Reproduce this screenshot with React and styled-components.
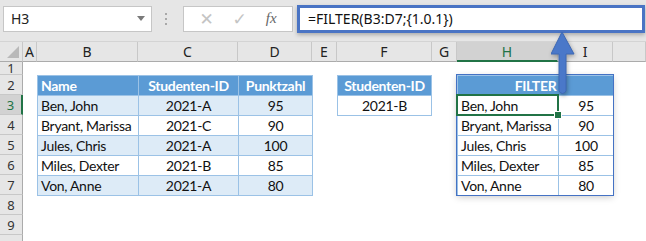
import styled, { createGlobalStyle } from "styled-components";

const GlobalStyle = createGlobalStyle`
  body {
    margin: 0;
    background: #ffffff;
    font-family: "Segoe UI", "Noto Sans", "DejaVu Sans", sans-serif;
  }
`;

const cols = ["A", "B", "C", "D", "E", "F", "G", "H", "I", ""];
// row 10 only peeks in at the bottom edge, its number is out of view
const rows = [1, 2, 3, 4, 5, 6, 7, 8, 9, 10];

const students = [
  { name: "Ben, John", id: "2021-A", score: 95 },
  { name: "Bryant, Marissa", id: "2021-C", score: 90 },
  { name: "Jules, Chris", id: "2021-A", score: 100 },
  { name: "Miles, Dexter", id: "2021-B", score: 85 },
  { name: "Von, Anne", id: "2021-A", score: 80 },
];

const App = () => {
  return (
    <Frame>
      <GlobalStyle />
      <Toolbar>
        <NameBox>
          <span>H3</span>
          <Caret />
        </NameBox>
        <Grip>
          <i />
          <i />
          <i />
        </Grip>
        <FxBox>
          <FxIcon $muted>✕</FxIcon>
          <FxIcon $muted>✓</FxIcon>
          <Fx>fx</Fx>
        </FxBox>
        <FormulaBox>=FILTER(B3:D7;{"{"}1.0.1{"}"})</FormulaBox>
      </Toolbar>

      <Sheet>
        <Corner />
        {cols.map((c, i) => (
          <ColHead key={i} $col={i + 2} $active={c === "H"}>
            {c}
          </ColHead>
        ))}
        {rows.map((r) => (
          <RowHead key={r} $row={r + 1} $active={r === 3}>
            {r < 10 ? r : ""}
          </RowHead>
        ))}

        <TableArea $cols="3 / 6" $rows="3 / 9">
          <DataTable>
            <colgroup>
              <col style={{ width: 101 }} />
              <col style={{ width: 100 }} />
              <col style={{ width: 74 }} />
            </colgroup>
            <tbody>
              <tr>
                <HeadCell $align="left">Name</HeadCell>
                <HeadCell>Studenten-ID</HeadCell>
                <HeadCell>Punktzahl</HeadCell>
              </tr>
              {students.map((s, i) => (
                <tr key={s.name}>
                  <Cell $band={i % 2 === 0} $align="left">
                    {s.name}
                  </Cell>
                  <Cell $band={i % 2 === 0}>{s.id}</Cell>
                  <Cell $band={i % 2 === 0}>{s.score}</Cell>
                </tr>
              ))}
            </tbody>
          </DataTable>
        </TableArea>

        <TableArea $cols="7 / 8" $rows="3 / 5">
          <DataTable>
            <tbody>
              <tr>
                <HeadCell>Studenten-ID</HeadCell>
              </tr>
              <tr>
                <Cell>2021-B</Cell>
              </tr>
            </tbody>
          </DataTable>
        </TableArea>

        <TableArea $cols="9 / 11" $rows="3 / 9" $spill>
          <DataTable>
            <colgroup>
              <col style={{ width: 101 }} />
              <col style={{ width: 55 }} />
            </colgroup>
            <tbody>
              <tr>
                <HeadCell colSpan={2}>FILTER</HeadCell>
              </tr>
              {students.map((s) => (
                <tr key={s.name}>
                  <Cell $align="left">{s.name}</Cell>
                  <Cell>{s.score}</Cell>
                </tr>
              ))}
            </tbody>
          </DataTable>
        </TableArea>

        <Selection />
      </Sheet>

      <Arrow viewBox="0 0 24 64" width="24" height="64">
        <path
          d="M11 0 L23 22 L15 22 L15 59 Q11.5 64 8 59 L8 22 L0 22 Z"
          fill="#4a78c9"
          stroke="#3d68b5"
          strokeWidth="1"
        />
      </Arrow>
    </Frame>
  );
};

export default App;

const Frame = styled.div`
  position: relative;
  width: 646px;
  height: 241px;
  overflow: hidden;
  background: #ffffff;
`;

const Toolbar = styled.div`
  display: flex;
  align-items: center;
  height: 42px;
  padding: 0 1px 0 3px;
  box-sizing: border-box;
  background: #e6e6e6;
  border-bottom: 1px solid #d4d4d4;
`;

const NameBox = styled.div`
  display: flex;
  align-items: center;
  justify-content: space-between;
  width: 149px;
  height: 26px;
  margin-top: -4px;
  padding: 0 6px 0 7px;
  box-sizing: border-box;
  background: #ffffff;
  border: 1px solid #c6c6c6;
  font-size: 14px;
  color: #222;
`;

const Caret = styled.span`
  width: 0;
  height: 0;
  border-left: 4px solid transparent;
  border-right: 4px solid transparent;
  border-top: 5px solid #7a7a7a;
`;

const Grip = styled.div`
  display: flex;
  flex-direction: column;
  gap: 3px;
  margin: -4px 0 0 13px;

  i {
    display: block;
    width: 2px;
    height: 2px;
    background: #a8a8a8;
  }
`;

const FxBox = styled.div`
  display: flex;
  align-items: center;
  justify-content: space-around;
  width: 110px;
  height: 26px;
  margin: -4px 0 0 16px;
  padding: 0 6px;
  box-sizing: border-box;
  background: #ffffff;
  border: 1px solid #c6c6c6;
`;

const FxIcon = styled.span`
  font-size: 17px;
  color: ${(p) => (p.$muted ? "#c4c4c4" : "#555")};
  font-family: "DejaVu Sans", sans-serif;
`;

const Fx = styled.span`
  font-family: "Liberation Serif", serif;
  font-style: italic;
  font-size: 15px;
  color: #666;
`;

const FormulaBox = styled.div`
  flex: 1;
  display: flex;
  align-items: center;
  height: 28px;
  margin: -4px 0 0 4px;
  padding: 0 8px;
  box-sizing: border-box;
  background: #ffffff;
  border: 3px solid #4a74c4;
  box-shadow: 0 2px 4px rgba(0, 0, 0, 0.25);
  font-size: 14px;
  color: #111;
  white-space: nowrap;
`;

const Sheet = styled.div`
  display: grid;
  grid-template-columns: 23px 14px 101px 100px 74px 25px 95px 25px 101px 55px 1fr;
  grid-template-rows: 20px 13px repeat(9, 20px);
  font-family: Lato, "Open Sans", sans-serif;
`;

const Corner = styled.div`
  grid-column: 1;
  grid-row: 1;
  position: relative;
  background: #e6e6e6;
  border-right: 1px solid #c8c8c8;
  border-bottom: 1px solid #ababab;

  &::after {
    content: "";
    position: absolute;
    right: 3px;
    bottom: 3px;
    border-left: 12px solid transparent;
    border-bottom: 12px solid #b9b9b9;
  }
`;

const ColHead = styled.div`
  grid-column: ${(p) => p.$col};
  grid-row: 1;
  display: flex;
  align-items: center;
  justify-content: center;
  background: ${(p) => (p.$active ? "#d2d2d2" : "#e6e6e6")};
  border-right: 1px solid #c8c8c8;
  border-bottom: ${(p) => (p.$active ? "2px solid #217346" : "1px solid #ababab")};
  font-family: "Segoe UI", "Noto Sans", sans-serif;
  font-size: 14px;
  color: ${(p) => (p.$active ? "#217346" : "#222")};
`;

const RowHead = styled.div`
  grid-column: 1;
  grid-row: ${(p) => p.$row};
  display: flex;
  align-items: center;
  justify-content: center;
  background: ${(p) => (p.$active ? "#d2d2d2" : "#e6e6e6")};
  border-right: ${(p) => (p.$active ? "2px solid #217346" : "1px solid #ababab")};
  border-bottom: 1px solid #c8c8c8;
  font-family: "Segoe UI", "Noto Sans", sans-serif;
  font-size: 13px;
  line-height: 12px;
  color: ${(p) => (p.$active ? "#217346" : "#333")};
`;

const TableArea = styled.div`
  grid-column: ${(p) => p.$cols};
  grid-row: ${(p) => p.$rows};
  ${(p) =>
    p.$spill &&
    `
    box-shadow: 0 2px 7px rgba(0, 0, 0, 0.22);
    outline: 1px solid #4472c4;
  `}
`;

const DataTable = styled.table`
  width: 100%;
  height: 100%;
  border-collapse: collapse;
  table-layout: fixed;
  font-size: 14px;
  letter-spacing: -0.3px;
  color: #111;

  td {
    height: 20px;
    padding: 0 3px;
    box-sizing: border-box;
    white-space: nowrap;
    overflow: hidden;
    line-height: 19px;
    vertical-align: bottom;
  }
`;

const HeadCell = styled.td`
  background: #5b9bd5;
  color: #ffffff;
  font-weight: 700;
  text-align: ${(p) => p.$align || "center"};
  border: 1px solid #9bc2e6;
`;

const Cell = styled.td`
  background: ${(p) => (p.$band ? "#ddebf7" : "#ffffff")};
  text-align: ${(p) => p.$align || "center"};
  border: 1px solid #9bc2e6;
`;

const Selection = styled.div`
  grid-column: 9;
  grid-row: 4;
  position: relative;
  margin: -1px;
  border: 2px solid #217346;
  pointer-events: none;

  &::after {
    content: "";
    position: absolute;
    right: -5px;
    bottom: -5px;
    width: 6px;
    height: 6px;
    background: #217346;
    border: 1px solid #ffffff;
  }
`;

const Arrow = styled.svg`
  position: absolute;
  left: 551px;
  top: 32px;
  filter: drop-shadow(1px 2px 2px rgba(0, 0, 0, 0.3));
`;
